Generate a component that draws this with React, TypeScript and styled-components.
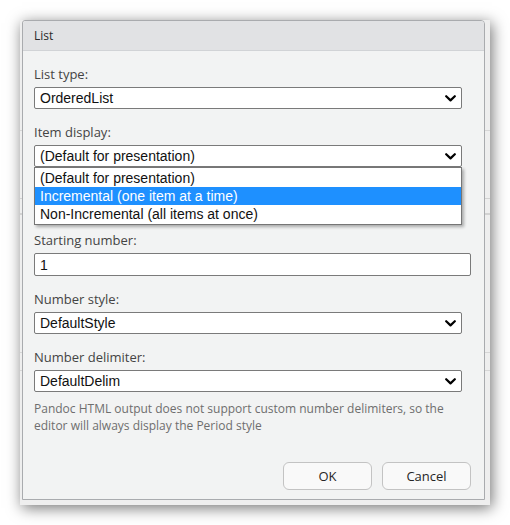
import React from "react";
import styled, { createGlobalStyle } from "styled-components";

const Global = createGlobalStyle`
  html, body { margin: 0; padding: 0; background: #ffffff; }
  body { width: 510px; height: 525px; overflow: hidden; }
`;

const uiFont = `"Open Sans", "Noto Sans", sans-serif`;
const ctlFont = `"Liberation Sans", Arial, sans-serif`;

const Page = styled.div`
  padding: 20px 0 0 20px;
`;

const Shot = styled.div`
  width: 470px;
  height: 485px;
  box-sizing: border-box;
  padding: 0 5px 5px 2px;
  background-color: #eeeeee;
  background-image: linear-gradient(
    to bottom,
    transparent 110px, #d6d6d6 110px, #d6d6d6 111px, transparent 111px,
    transparent 178px, #d2d2d2 178px, #d2d2d2 179px, transparent 179px,
    transparent 193px, #d2d2d2 193px, #d2d2d2 195px, transparent 195px,
    transparent 332px, #d6d6d6 332px, #d6d6d6 333px, transparent 333px,
    transparent 350px, #d6d6d6 350px, #d6d6d6 351px, transparent 351px
  );
  box-shadow: 2px 3px 14px rgba(0, 0, 0, 0.55);
`;

const Dialog = styled.div`
  width: 463px;
  height: 480px;
  box-sizing: border-box;
  border: 1px solid #a9abae;
  border-radius: 3px 4px 0 0;
  background: #f2f3f3;
  display: flex;
  flex-direction: column;
  font-family: ${uiFont};
`;

const TitleBar = styled.div`
  height: 30px;
  flex: none;
  box-sizing: border-box;
  background: #e1e2e4;
  border-bottom: 1px solid #d1d3d6;
  border-radius: 3px 3px 0 0;
  display: flex;
  align-items: center;
  padding-left: 11px;
  font-size: 12px;
  color: #2b2b2b;
`;

const Body = styled.div`
  flex: 1;
  display: flex;
  flex-direction: column;
  padding: 15px 13px 9px 11px;
`;

const Field = styled.div<{ $gap?: number }>`
  position: relative;
  display: flex;
  flex-direction: column;
  margin-bottom: ${(p) => (p.$gap ?? 15)}px;
`;

const Label = styled.div`
  font-size: 13px;
  line-height: 16px;
  color: #444444;
  margin-bottom: 5px;
`;

const SelectBox = styled.div`
  width: 428px;
  height: 22px;
  box-sizing: border-box;
  border: 1px solid #7a7a7a;
  border-radius: 2px;
  background: #ffffff;
  display: flex;
  align-items: center;
  justify-content: space-between;
  padding: 0 5px 0 5px;
  font-family: ${ctlFont};
  font-size: 14px;
  color: #111;
`;

const TextInput = styled.div`
  width: 437px;
  height: 23px;
  box-sizing: border-box;
  border: 1px solid #7a7a7a;
  border-radius: 2px;
  background: #ffffff;
  display: flex;
  align-items: center;
  padding: 0 5px;
  font-family: ${ctlFont};
  font-size: 14px;
  color: #111;
`;

const Dropdown = styled.div`
  position: absolute;
  top: 100%;
  left: 0;
  width: 428px;
  box-sizing: border-box;
  border: 1px solid #767676;
  background: #ffffff;
  box-shadow: 2px 2px 3px rgba(0, 0, 0, 0.3);
  padding: 1px 0;
  z-index: 2;
`;

const Option = styled.div<{ $active?: boolean }>`
  height: 18px;
  display: flex;
  align-items: center;
  padding-left: 5px;
  font-family: ${ctlFont};
  font-size: 14px;
  color: ${(p) => (p.$active ? "#ffffff" : "#111")};
  background: ${(p) => (p.$active ? "#1e90ff" : "transparent")};
`;

const HiddenSpacer = styled.div`
  height: 50px;
`;

const Help = styled.div`
  margin-top: 8px;
  font-size: 12px;
  line-height: 17px;
  color: #6e6e6e;
  width: 425px;
`;

const ButtonRow = styled.div`
  margin-top: auto;
  display: flex;
  justify-content: flex-end;
  gap: 10px;
`;

const Button = styled.button`
  width: 89px;
  height: 28px;
  box-sizing: border-box;
  border: 1px solid #c3c3c3;
  border-radius: 6px;
  background: #f9f9f9;
  font-family: ${uiFont};
  font-size: 13px;
  color: #262626;
  padding: 0;
`;

const Chevron = () => (
  <svg width="11" height="7" viewBox="0 0 11 7" aria-hidden="true">
    <path d="M1.2 1.2 L5.5 5.4 L9.8 1.2" fill="none" stroke="#000" strokeWidth="2.2" strokeLinecap="round" strokeLinejoin="round" />
  </svg>
);

const Select = ({ value, children }: { value: string; children?: React.ReactNode }) => (
  <>
    <SelectBox>
      <span>{value}</span>
      <Chevron />
    </SelectBox>
    {children}
  </>
);

export default function App() {
  return (
    <>
      <Global />
      <Page>
        <Shot>
          <Dialog>
            <TitleBar>List</TitleBar>
            <Body>
              <Field>
                <Label>List type:</Label>
                <Select value="OrderedList" />
              </Field>
              <Field>
                <Label>Item display:</Label>
                <Select value="(Default for presentation)">
                  <Dropdown>
                    <Option>(Default for presentation)</Option>
                    <Option $active>Incremental (one item at a time)</Option>
                    <Option>Non-Incremental (all items at once)</Option>
                  </Dropdown>
                </Select>
              </Field>
              <HiddenSpacer />
              <Field>
                <Label>Starting number:</Label>
                <TextInput>1</TextInput>
              </Field>
              <Field>
                <Label>Number style:</Label>
                <Select value="DefaultStyle" />
              </Field>
              <Field $gap={0}>
                <Label>Number delimiter:</Label>
                <Select value="DefaultDelim" />
              </Field>
              <Help>
                Pandoc HTML output does not support custom number delimiters, so the editor will always display the Period style
              </Help>
              <ButtonRow>
                <Button>OK</Button>
                <Button>Cancel</Button>
              </ButtonRow>
            </Body>
          </Dialog>
        </Shot>
      </Page>
    </>
  );
}
